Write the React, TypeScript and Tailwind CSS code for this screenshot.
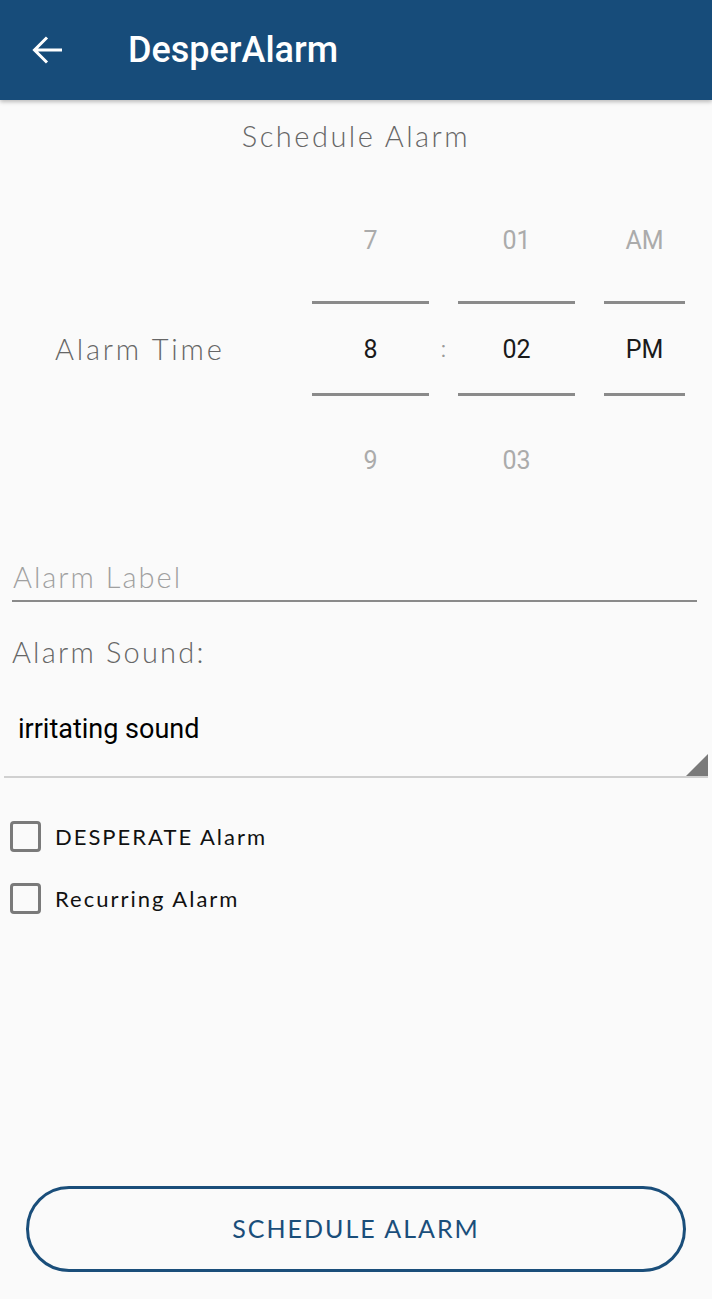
import React from "react";

const body = { fontFamily: "Lato, 'Noto Sans', sans-serif" };
const roboto = { fontFamily: "Roboto, 'Noto Sans', sans-serif" };

function Column({ top, mid, bot, w }: { top: string; mid: string; bot: string; w: string }) {
  return (
    <div className={`flex flex-col items-center ${w}`} style={roboto}>
      <div className="h-[110px] flex items-center justify-center text-[25px] text-[#ababab] pb-[10px]">{top}</div>
      <div className="w-full h-[3px] bg-[#8a8a8a]" />
      <div className="h-[89px] flex items-center justify-center text-[25px] text-[#1a1a1a] pt-[2px]">{mid}</div>
      <div className="w-full h-[3px] bg-[#8a8a8a]" />
      <div className="h-[110px] flex items-center justify-center text-[25px] text-[#ababab] pt-[20px]">{bot}</div>
    </div>
  );
}

function Check({ label }: { label: string }) {
  return (
    <div className="flex items-center h-[62px]">
      <div className="ml-[10px] w-[31px] h-[31px] border-[3px] border-[#7a7a7a] rounded-[4px]" />
      <span className="ml-[14px] text-[22px] text-[#111] tracking-[2px]" style={body}>{label}</span>
    </div>
  );
}

export default function App() {
  return (
    <div className="w-[712px] h-[1299px] bg-[#fafafa] flex flex-col overflow-hidden">
      <div className="h-[100px] bg-[#174c7a] flex items-center shadow-[0_2px_4px_rgba(0,0,0,0.25)] relative z-10">
        <svg className="ml-[32px]" width="31" height="28" viewBox="0 0 31 28" fill="none">
          <path d="M30 14H2.5M15 1.5L2.5 14L15 26.5" stroke="white" strokeWidth="3" />
        </svg>
        <span className="ml-[65px] text-white text-[36px] font-medium" style={roboto}>DesperAlarm</span>
      </div>

      <div className="text-center text-[29px] text-[#666] font-light tracking-[2.5px] mt-[16px] leading-[40px]" style={body}>
        Schedule Alarm
      </div>

      <div className="flex items-center mt-[35px]">
        <div className="w-[312px] pl-[55px] text-[29px] text-[#666] font-light tracking-[2.8px]" style={body}>Alarm Time</div>
        <Column top="7" mid="8" bot="9" w="w-[117px]" />
        <div className="w-[29px] text-center text-[22px] text-[#999] pt-[2px]" style={roboto}>:</div>
        <Column top="01" mid="02" bot="03" w="w-[117px]" />
        <div className="w-[29px]" />
        <Column top="AM" mid="PM" bot="" w="w-[81px]" />
      </div>

      <div className="mx-[12px] mr-[15px] mt-[40px] border-b-2 border-[#8a8a8a] h-[56px] flex items-end pb-[2px] pl-[1px]">
        <span className="text-[29px] text-[#a0a0a0] font-light tracking-[2px]" style={body}>Alarm Label</span>
      </div>

      <div className="ml-[12px] mt-[30px] text-[29px] text-[#666] font-light tracking-[2.2px] leading-[40px]" style={body}>Alarm Sound:</div>

      <div className="relative mx-[4px] mr-[4px] mt-[16px] h-[90px] border-b-2 border-[#d0d0d0] flex items-start pt-[21px] pl-[14px]">
        <span className="text-[27px] text-black" style={roboto}>irritating sound</span>
        <div className="absolute right-[0px] bottom-0 w-0 h-0 border-l-[22px] border-l-transparent border-b-[22px] border-b-[#7a7a7a]" />
      </div>

      <div className="mt-[27px] flex flex-col">
        <Check label="DESPERATE Alarm" />
        <Check label="Recurring Alarm" />
      </div>

      <div className="flex-1" />

      <div className="mx-[26px] mb-[27px] h-[86px] border-[3px] border-[#1a4e7a] rounded-full flex items-center justify-center">
        <span className="text-[25px] text-[#1a4e7a] tracking-[2px]" style={body}>SCHEDULE ALARM</span>
      </div>
    </div>
  );
}
